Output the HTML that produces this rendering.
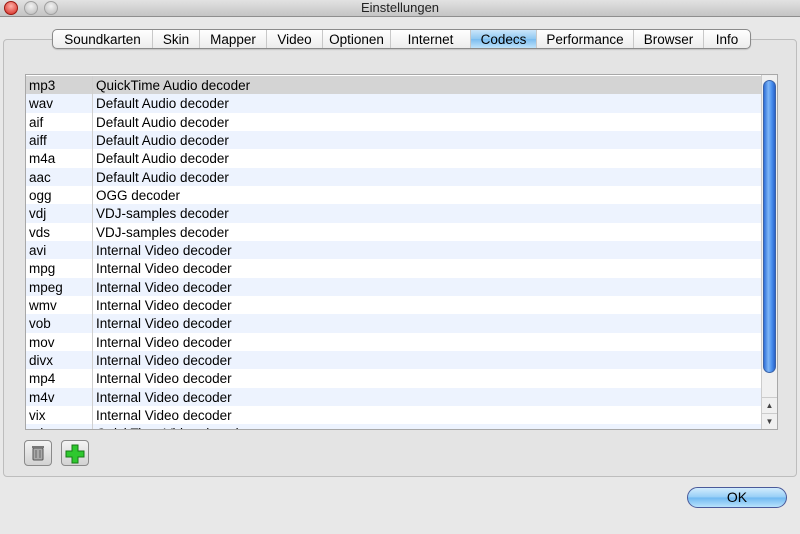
<!DOCTYPE html>
<html><head><meta charset="utf-8"><style>
*{margin:0;padding:0;box-sizing:border-box}
body{width:800px;height:534px;background:#e8e8e8;font-family:"Liberation Sans",sans-serif;font-size:13.5px;color:#000;position:relative;overflow:hidden}
.title{position:absolute;left:0;top:0;width:800px;height:17px;background:linear-gradient(#e2e2e2,#c4c4c4);border-bottom:1px solid #8e8e8e;text-align:center;font-size:13px;line-height:16px;color:#222}
.dot{position:absolute;top:1px;width:14px;height:14px;border-radius:50%;background:radial-gradient(circle at 50% 35%,#f2f2f2,#b8b8b8);border:1px solid #a0a0a0}
.group{position:absolute;left:3px;top:39px;width:794px;height:438px;border:1px solid #bdbdbd;border-radius:4px;background:#e4e4e4}
.tabs{position:absolute;left:52px;top:29px;height:20px;display:flex;border:1px solid #8a8a8a;border-radius:5px;background:linear-gradient(#fff,#ececec);overflow:hidden;box-shadow:0 1px 1px rgba(0,0,0,.15)}
.tabs div{height:18px;line-height:19px;text-align:center;border-right:1px solid #c8c8c8;font-size:13.5px;white-space:nowrap}
.tabs div:last-child{border-right:none}
.tabs .sel{background:linear-gradient(#cbe6fb,#8fc8f2 50%,#7bbcef 51%,#bfe3fb)}
.table{position:absolute;left:25px;top:74px;width:753px;height:356px;border:1px solid #a8a8a8;background:#fff;overflow:hidden;padding-top:1px}
.row{height:18.33px;line-height:19px;display:flex;white-space:nowrap}
.row:nth-child(even){background:#edf3fe}
.row.first{background:#d4d4d4}
.c1{width:67px;padding-left:3px;border-right:1px solid #d0d0d0}
.c2{padding-left:3px}
.sb{position:absolute;right:0;top:0;width:16px;height:354px;background:#f0f0f0;border-left:1px solid #ccc}
.thumb{position:absolute;left:1px;top:5px;width:13px;height:293px;border-radius:7px;background:linear-gradient(90deg,#2f6fd8,#7fb6f6 40%,#4a90ef 70%,#2a62c8);border:1px solid #3a63a8}
.arr{position:absolute;left:0;width:15px;height:16px;font-size:8px;text-align:center;line-height:16px;color:#444;border-top:1px solid #ccc}
.btn{position:absolute;top:440px;width:28px;height:26px;border:1px solid #8a8a8a;border-radius:4px;background:linear-gradient(#f4f4f4,#d2d2d2)}
.ok{position:absolute;left:687px;top:487px;width:100px;height:21px;border:1px solid #4a5a9a;border-radius:11px;background:linear-gradient(#d2ecfd,#94cdf6 50%,#6fb8f1 51%,#b8e2fc);text-align:center;line-height:19px;font-size:14px}
</style></head><body>
<div class="title">Einstellungen</div>
<div class="dot" style="left:4px;background:radial-gradient(circle at 50% 35%,#ffb0a8,#d2241c);border-color:#9a1a12"></div>
<div class="dot" style="left:24px"></div>
<div class="dot" style="left:44px"></div>
<div class="group"></div>
<div class="tabs">
<div style="width:100px">Soundkarten</div><div style="width:47px">Skin</div><div style="width:67px">Mapper</div><div style="width:56px">Video</div><div style="width:68px">Optionen</div><div style="width:80px">Internet</div><div class="sel" style="width:66px">Codecs</div><div style="width:97px">Performance</div><div style="width:70px">Browser</div><div style="width:46px">Info</div>
</div>
<div class="table">
<div class="row first"><div class="c1">mp3</div><div class="c2">QuickTime Audio decoder</div></div>
<div class="row"><div class="c1">wav</div><div class="c2">Default Audio decoder</div></div>
<div class="row"><div class="c1">aif</div><div class="c2">Default Audio decoder</div></div>
<div class="row"><div class="c1">aiff</div><div class="c2">Default Audio decoder</div></div>
<div class="row"><div class="c1">m4a</div><div class="c2">Default Audio decoder</div></div>
<div class="row"><div class="c1">aac</div><div class="c2">Default Audio decoder</div></div>
<div class="row"><div class="c1">ogg</div><div class="c2">OGG decoder</div></div>
<div class="row"><div class="c1">vdj</div><div class="c2">VDJ-samples decoder</div></div>
<div class="row"><div class="c1">vds</div><div class="c2">VDJ-samples decoder</div></div>
<div class="row"><div class="c1">avi</div><div class="c2">Internal Video decoder</div></div>
<div class="row"><div class="c1">mpg</div><div class="c2">Internal Video decoder</div></div>
<div class="row"><div class="c1">mpeg</div><div class="c2">Internal Video decoder</div></div>
<div class="row"><div class="c1">wmv</div><div class="c2">Internal Video decoder</div></div>
<div class="row"><div class="c1">vob</div><div class="c2">Internal Video decoder</div></div>
<div class="row"><div class="c1">mov</div><div class="c2">Internal Video decoder</div></div>
<div class="row"><div class="c1">divx</div><div class="c2">Internal Video decoder</div></div>
<div class="row"><div class="c1">mp4</div><div class="c2">Internal Video decoder</div></div>
<div class="row"><div class="c1">m4v</div><div class="c2">Internal Video decoder</div></div>
<div class="row"><div class="c1">vix</div><div class="c2">Internal Video decoder</div></div>
<div class="row"><div class="c1">mkv</div><div class="c2">QuickTime Video decoder</div></div>
<div class="sb"><div class="thumb"></div><div class="arr" style="top:322px">▲</div><div class="arr" style="top:338px">▼</div></div>
</div>
<div class="btn" style="left:24px"><svg width="26" height="24" viewBox="0 0 26 24"><rect x="8" y="7" width="10" height="12" rx="1" fill="#aaa" stroke="#555"/><rect x="7" y="5" width="12" height="2" fill="#777"/><line x1="11" y1="9" x2="11" y2="17" stroke="#666"/><line x1="15" y1="9" x2="15" y2="17" stroke="#666"/></svg></div>
<div class="btn" style="left:61px"><svg width="26" height="24" viewBox="0 0 26 24"><path d="M10 4h6v6h6v6h-6v6h-6v-6H4v-6h6z" fill="#2ec82e" stroke="#167a16"/></svg></div>
<div class="ok">OK</div>
</body></html>
